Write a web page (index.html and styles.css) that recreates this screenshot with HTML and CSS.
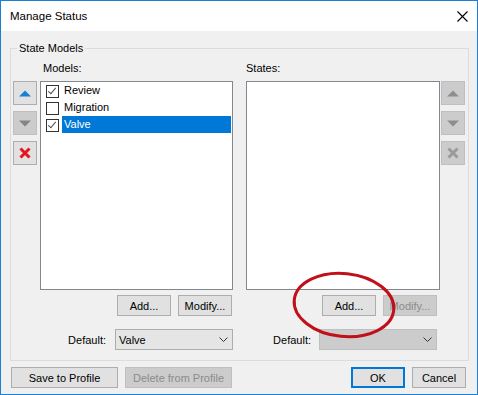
FILE: index.html
```html
<!DOCTYPE html>
<html lang="en">
<head>
  <meta charset="UTF-8">
  <title>Manage Status</title>
  <link rel="stylesheet" href="styles.css">
</head>
<body>
  <div class="window">
    <div class="titlebar">
      <span class="title">Manage Status</span>
      <svg class="close" width="11" height="11" viewBox="0 0 11 11">
        <path d="M0.5 0.5 L10.5 10.5 M10.5 0.5 L0.5 10.5" stroke="#000" stroke-width="1.1" fill="none"/>
      </svg>
    </div>

    <div class="client">
      <fieldset class="group">
        <legend>State Models</legend>
        <div class="group-grid">
          <div class="caption models-caption">Models:</div>
          <div class="caption states-caption">States:</div>

          <!-- model order / delete -->
          <div class="side-buttons models-side">
            <button class="icon-btn">
              <svg width="12" height="7" viewBox="0 0 12 7"><polygon points="0,6.5 6,0.5 12,6.5" fill="#1a7fd4"/></svg>
            </button>
            <button class="icon-btn" disabled>
              <svg width="12" height="7" viewBox="0 0 12 7"><polygon points="0,0.5 6,6.5 12,0.5" fill="#858585"/></svg>
            </button>
            <button class="icon-btn">
              <svg width="12" height="12" viewBox="0 0 12 12"><path d="M1.5 1.5 L10.5 10.5 M10.5 1.5 L1.5 10.5" stroke="#e8141c" stroke-width="3" fill="none"/></svg>
            </button>
          </div>

          <div class="listbox models-list">
            <div class="item">
              <span class="check checked"></span><span class="label">Review</span>
            </div>
            <div class="item">
              <span class="check"></span><span class="label">Migration</span>
            </div>
            <div class="item selected">
              <span class="check checked"></span><span class="label">Valve</span>
            </div>
          </div>

          <div class="listbox states-list"></div>

          <div class="side-buttons states-side">
            <button class="icon-btn" disabled>
              <svg width="12" height="7" viewBox="0 0 12 7"><polygon points="0,6.5 6,0.5 12,6.5" fill="#8e8e8e"/></svg>
            </button>
            <button class="icon-btn" disabled>
              <svg width="12" height="7" viewBox="0 0 12 7"><polygon points="0,0.5 6,6.5 12,0.5" fill="#8e8e8e"/></svg>
            </button>
            <button class="icon-btn" disabled>
              <svg width="12" height="12" viewBox="0 0 12 12"><path d="M1.5 1.5 L10.5 10.5 M10.5 1.5 L1.5 10.5" stroke="#9a9a9a" stroke-width="3" fill="none"/></svg>
            </button>
          </div>

          <div class="btn-row models-row">
            <button class="btn">Add...</button>
            <button class="btn">Modify...</button>
          </div>
          <div class="btn-row states-row">
            <button class="btn">Add...</button>
            <button class="btn" disabled>Modify...</button>
          </div>

          <div class="default-row models-default">
            <span>Default:</span>
            <div class="combo">
              <span>Valve</span>
              <svg width="9" height="5" viewBox="0 0 9 5"><path d="M0.5 0.5 L4.5 4.5 L8.5 0.5" stroke="#333" fill="none"/></svg>
            </div>
          </div>
          <div class="default-row states-default">
            <span>Default:</span>
            <div class="combo disabled">
              <span></span>
              <svg width="9" height="5" viewBox="0 0 9 5"><path d="M0.5 0.5 L4.5 4.5 L8.5 0.5" stroke="#333" fill="none"/></svg>
            </div>
          </div>
        </div>
      </fieldset>

      <div class="footer">
        <button class="btn wide">Save to Profile</button>
        <button class="btn wide" disabled>Delete from Profile</button>
        <span class="spacer"></span>
        <button class="btn default">OK</button>
        <button class="btn">Cancel</button>
      </div>
    </div>

    <!-- hand-drawn highlight -->
    <svg class="markup" width="478" height="395" viewBox="0 0 478 395">
      <ellipse cx="344" cy="305" rx="50" ry="31.5" transform="rotate(6 344 305)" fill="none" stroke="#c0101a" stroke-width="3"/>
    </svg>
  </div>
</body>
</html>
```

FILE: styles.css
```css
body {
  margin: 0;
  font-family: "Liberation Sans", Arial, sans-serif;
  font-size: 11px;
  color: #000;
}

.window {
  position: relative;
  width: 478px;
  height: 395px;
  box-sizing: border-box;
  border: 1px solid #1a7fd5;
  background-color: #f0f0f0;
  display: flex;
  flex-direction: column;
}

.titlebar {
  height: 30px;
  background-color: #fff;
  display: flex;
  align-items: center;
  padding: 0 9px 0 9px;
}

.title {
  flex: 1;
  font-size: 11.5px;
}

.client {
  flex: 1;
  padding: 10px 8px 0 9px;
}

.group {
  margin: 0;
  padding: 5px 3px 10px 2px;
  border: 1px solid #dcdcdc;
  min-width: 0;
}

.group legend {
  margin-left: 4px;
  padding: 0 2px;
  line-height: 15px;
}

.group-grid {
  display: grid;
  grid-template-columns: 24px 3px 193px 13px 194px 1px 24px;
}

.caption {
  height: 20px;
  line-height: 14px;
}

.models-caption {
  grid-column: 3;
  padding-left: 3px;
}

.states-caption {
  grid-column: 5;
}

.side-buttons {
  display: flex;
  flex-direction: column;
  gap: 6px;
}

.models-side {
  grid-column: 1;
  grid-row: 2;
}

.states-side {
  grid-column: 7;
  grid-row: 2;
}

.icon-btn {
  width: 24px;
  height: 24px;
  padding: 0;
  margin: 0;
  border: 1px solid #adadad;
  background-color: #e1e1e1;
  display: flex;
  align-items: center;
  justify-content: center;
}

.icon-btn:disabled {
  border-color: #bfbfbf;
  background-color: #cccccc;
}

.listbox {
  grid-row: 2;
  height: 209px;
  box-sizing: border-box;
  border: 1px solid #828790;
  background-color: #fff;
}

.models-list {
  grid-column: 3;
}

.states-list {
  grid-column: 5;
}

.item {
  height: 17px;
  display: flex;
  align-items: center;
}

.check {
  width: 13px;
  height: 13px;
  box-sizing: border-box;
  border: 1px solid #333;
  background-color: #fff;
  margin: 1px 3px 0 5px;
  position: relative;
}

.check.checked::after {
  content: "";
  position: absolute;
  left: 3px;
  top: 0px;
  width: 3px;
  height: 7px;
  border-right: 1px solid #4a4a4a;
  border-bottom: 1px solid #4a4a4a;
  transform: rotate(40deg);
}

.item .label {
  flex: 1;
  height: 17px;
  line-height: 17px;
  padding-left: 2px;
  margin-right: 1px;
}

.item.selected .label {
  background-color: #0078d7;
  color: #fff;
}

.btn-row {
  grid-row: 3;
  margin-top: 5px;
  display: flex;
  justify-content: flex-end;
  gap: 7px;
}

.models-row {
  grid-column: 3;
  padding-right: 1px;
}

.states-row {
  grid-column: 5;
  padding-right: 3px;
}

.btn {
  width: 54px;
  height: 21px;
  margin: 0;
  padding: 0;
  border: 1px solid #adadad;
  background-color: #e1e1e1;
  font-family: inherit;
  font-size: 11px;
  color: #000;
}

.btn:disabled {
  border-color: #bfbfbf;
  background-color: #cccccc;
  color: #8b8b8b;
}

.btn.default {
  border: 2px solid #0078d7;
}

.default-row {
  grid-row: 4;
  margin-top: 13px;
  display: flex;
  align-items: center;
  justify-content: flex-end;
}

.models-default {
  grid-column: 1 / 4;
  gap: 9px;
}

.states-default {
  grid-column: 5 / 8;
  gap: 8px;
  padding-right: 28px;
}

.combo {
  width: 118px;
  height: 21px;
  box-sizing: border-box;
  border: 1px solid #adadad;
  background-color: #e5e5e5;
  display: flex;
  align-items: center;
  justify-content: space-between;
  padding: 0 4px 0 3px;
}

.combo.disabled {
  border-color: #bfbfbf;
  background-color: #cccccc;
}

.footer {
  margin-top: 6px;
  padding: 0 3px 0 1px;
  display: flex;
  gap: 7px;
}

.footer .wide {
  width: 107px;
}

.footer .spacer {
  flex: 1;
}

.markup {
  position: absolute;
  left: -1px;
  top: -1px;
  pointer-events: none;
}
```
